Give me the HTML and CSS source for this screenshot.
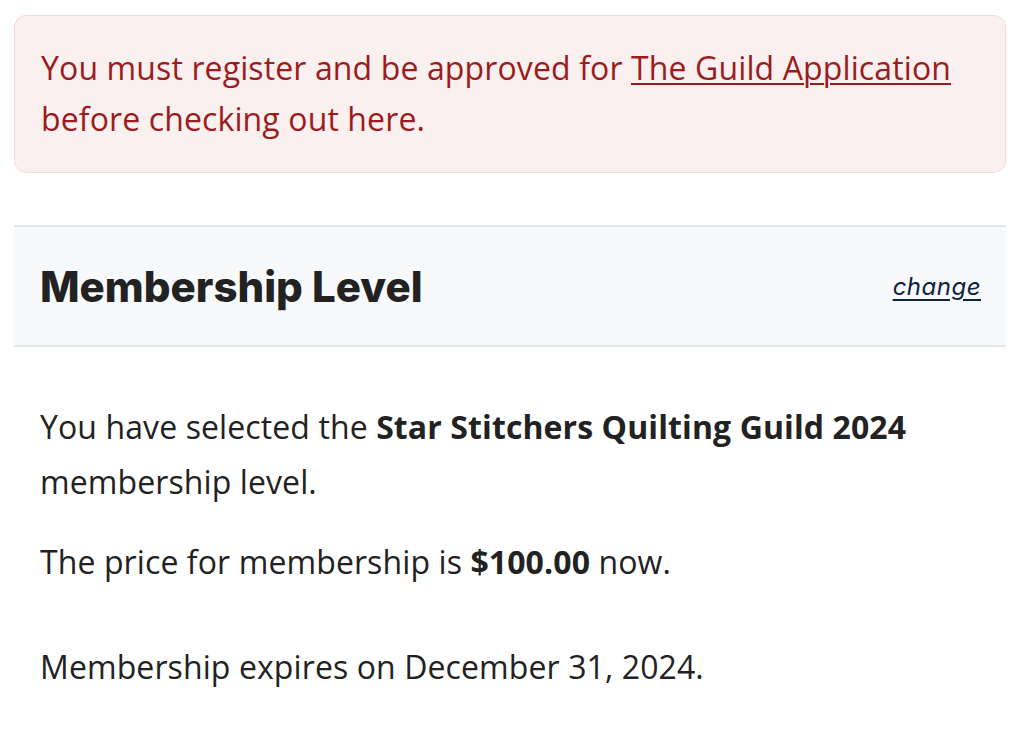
FILE: index.html
```html
<!DOCTYPE html>
<html lang="en">
<head>
    <meta charset="UTF-8">
    <meta name="viewport" content="width=device-width, initial-scale=1.0">
    <title>Membership Checkout</title>
    <link rel="stylesheet" href="styles.css">
</head>
<body>
    <div class="checkout">
        <div class="message-error">
            You must register and be approved for <a href="#">The Guild Application</a> before checking out here.
        </div>

        <div class="level-header">
            <h2 class="level-title">Membership Level</h2>
            <a href="#" class="level-change">change</a>
        </div>

        <div class="level-body">
            <p>You have selected the <strong>Star Stitchers Quilting Guild 2024</strong> membership level.</p>
            <p>The price for membership is <strong>$100.00</strong> now.</p>
            <p class="expires">Membership expires on December 31, 2024.</p>
        </div>
    </div>
</body>
</html>
```

FILE: styles.css
```css
body {
    margin: 0;
    padding: 0;
    background: #fff;
    font-family: "Open Sans", "Noto Sans", sans-serif;
    color: #222;
}
.checkout {
    padding: 15px 18px 0 14px;
}
.message-error {
    background: #fbf0f0;
    border: 1px solid #f5dcdc;
    border-radius: 12px;
    color: #9b1c1c;
    font-size: 32px;
    line-height: 51px;
    letter-spacing: 0.12px;
    padding: 26px 26px 28px 26px;
}
.message-error a {
    color: #9b1c1c;
    text-decoration: underline;
    text-underline-offset: 3px;
    text-decoration-thickness: 2px;
}
.level-header {
    margin-top: 52px;
    background: #f7f9fb;
    border-top: 2px solid #e1e6e9;
    border-bottom: 2px solid #e1e6e9;
    height: 118px;
    display: flex;
    align-items: center;
    justify-content: space-between;
    padding: 0 25px 0 26px;
}
.level-title {
    margin: 0;
    font-family: Inter, "Noto Sans", sans-serif;
    font-weight: 800;
    font-size: 42px;
    color: #222;
}
.level-change {
    font-family: Inter, "Noto Sans", sans-serif;
    font-style: italic;
    font-size: 24px;
    letter-spacing: 0.5px;
    color: #0c2340;
    text-decoration: underline;
    text-underline-offset: 4px;
}
.level-body {
    padding: 52px 26px 0 26px;
    font-size: 32px;
    line-height: 55px;
    letter-spacing: 0.1px;
}
.level-body p {
    margin: 0 0 25px 0;
}
.level-body strong {
    font-weight: 700;
}
.level-body .expires {
    margin-top: 50px;
}
```
